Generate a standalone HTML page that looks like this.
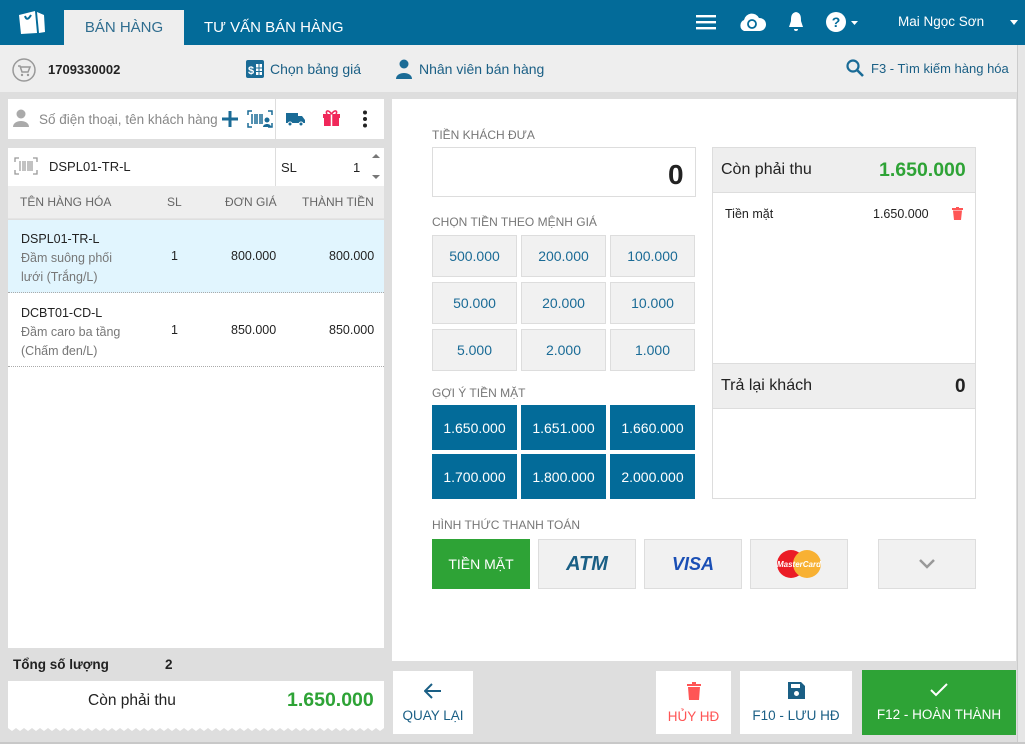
<!DOCTYPE html>
<html><head><meta charset="utf-8"><style>
*{box-sizing:border-box;margin:0;padding:0}
body{width:1025px;height:744px;overflow:hidden;background:#dedede;font-family:"Liberation Sans",sans-serif;position:relative;font-size:13px;color:#222}
.a{position:absolute}
.top{left:0;top:0;width:1025px;height:45px;background:#036b99}
.sub{left:0;top:45px;width:1017px;height:47px;background:#eeeeee}
.w{background:#fff}
.btn{position:absolute;display:flex;align-items:center;justify-content:center}
.den{background:#f1f1f1;border:1px solid #ddd;color:#1a6b96;font-size:14px;width:85px;height:42px}
.sug{background:#036b99;color:#fff;font-size:14px;width:85px;height:45px}
.lbl{color:#777;font-size:12px}
.pay{background:#f1f1f1;border:1px solid #ddd;width:98px;height:50px}
</style></head><body>
<div class="a" style="right:0;top:45px;width:8px;height:699px;background:#e6e6e6;border-left:1px solid #ccc"></div>
<div class="a" style="left:0;bottom:0;width:1025px;height:2px;background:#c8c8c8"></div>
<div class="a top"></div>
<svg class="a" style="left:17px;top:9px" width="30" height="26" viewBox="0 0 30 26"><path d="M2 6 L18 2 L20 24 L4 25 Z" fill="#fff"/><path d="M20 3 L27 6 L28 23 L22 24 Z" fill="#fff"/><path d="M8 7 Q10 13 14 6" stroke="#036b99" stroke-width="2" fill="none"/></svg>
<div class="a" style="left:64px;top:10px;width:120px;height:35px;background:#eee;color:#2f6d8f;font-size:15px;text-align:center;line-height:36px">BÁN HÀNG</div>
<div class="a" style="left:204px;top:10px;color:#fff;font-size:15px;line-height:36px">TƯ VẤN BÁN HÀNG</div>
<svg class="a" style="left:696px;top:14px" width="20" height="16"><rect y="1" width="20" height="2.4" fill="#fff"/><rect y="7" width="20" height="2.4" fill="#fff"/><rect y="13" width="20" height="2.4" fill="#fff"/></svg>
<svg class="a" style="left:738px;top:11px" width="28" height="22"><path d="M6 20 A6 6 0 0 1 6 9 A8 8 0 0 1 21 7 A6 6 0 0 1 22 20 Z" fill="#fff"/><circle cx="14" cy="13" r="4" stroke="#036b99" stroke-width="1.8" fill="none"/></svg>
<svg class="a" style="left:787px;top:11px" width="18" height="22"><path d="M9 1 C4 2 4 6 4 10 L2 16 L16 16 L14 10 C14 6 14 2 9 1Z M7 18 h4 a2 2 0 0 1-4 0Z" fill="#fff"/></svg>
<svg class="a" style="left:825px;top:11px" width="36" height="22"><circle cx="11" cy="11" r="10" fill="#fff"/><text x="11" y="16" font-size="14" font-weight="bold" fill="#036b99" text-anchor="middle" font-family="Liberation Sans">?</text><path d="M26 10 h7 l-3.5 4z" fill="#fff"/></svg>
<div class="a" style="left:898px;top:14px;color:#fff;font-size:13.5px">Mai Ngọc Sơn</div>
<svg class="a" style="left:1010px;top:20px" width="9" height="6"><path d="M0 0h8l-4 5z" fill="#fff"/></svg>

<div class="a sub"></div>
<svg class="a" style="left:12px;top:58px" width="24" height="24"><circle cx="12" cy="12" r="11" fill="none" stroke="#999" stroke-width="1.5"/><path d="M6 8h2l2 6h6l2-5h-9" stroke="#999" stroke-width="1.5" fill="none"/><circle cx="10" cy="17" r="1.2" fill="#999"/><circle cx="16" cy="17" r="1.2" fill="#999"/></svg>
<div class="a" style="left:48px;top:62px;font-weight:bold;font-size:13px">1709330002</div>
<svg class="a" style="left:246px;top:60px" width="18" height="18"><rect width="18" height="18" rx="2" fill="#1a6b96"/><text x="5" y="14" font-size="11" fill="#fff" font-weight="bold" text-anchor="middle" font-family="Liberation Sans">$</text><rect x="10" y="4" width="6" height="11" fill="#fff"/><path d="M13 4v11M10 8h6M10 11.5h6" stroke="#1a6b96"/></svg>
<div class="a" style="left:270px;top:61px;color:#1a5f85;font-size:14px">Chọn bảng giá</div>
<svg class="a" style="left:395px;top:59px" width="18" height="20"><circle cx="9" cy="5" r="4.5" fill="#1a6b96"/><path d="M1 20 C1 12 17 12 17 20Z" fill="#1a6b96"/></svg>
<div class="a" style="left:419px;top:61px;color:#1a5f85;font-size:14px">Nhân viên bán hàng</div>
<svg class="a" style="left:846px;top:59px" width="18" height="18"><circle cx="7" cy="7" r="5.5" stroke="#1a6b96" stroke-width="2.2" fill="none"/><path d="M11 11l6 6" stroke="#1a6b96" stroke-width="2.6"/></svg>
<div class="a" style="left:871px;top:61px;color:#1a5f85;font-size:13px">F3 - Tìm kiếm hàng hóa</div>

<!-- left -->
<div class="a w" style="left:8px;top:99px;width:376px;height:40px"></div>
<div class="a" style="left:275px;top:99px;width:1px;height:40px;background:#ddd"></div>
<svg class="a" style="left:12px;top:109px" width="18" height="18"><circle cx="9" cy="5" r="4.5" fill="#aaa"/><path d="M1 18 C1 10 17 10 17 18Z" fill="#aaa"/></svg>
<div class="a" style="left:39px;top:112px;color:#888;font-size:13.5px">Số điện thoại, tên khách hàng</div>
<svg class="a" style="left:221px;top:110px" width="18" height="18"><path d="M9 1v16M1 9h16" stroke="#1a6b96" stroke-width="3"/></svg>
<svg class="a" style="left:247px;top:110px" width="26" height="18"><path d="M1 5V1h4M21 1h4v4M1 13v4h4M21 17h4v-4" stroke="#1a6b96" fill="none" stroke-width="1.5"/><path d="M5 4v10M8 4v10M10 4v10M13 4v10M15 4v10" stroke="#1a6b96" stroke-width="1.5"/><circle cx="20" cy="10" r="2.5" fill="#1a6b96"/><path d="M16 17c0-4 8-4 8 0z" fill="#1a6b96"/></svg>
<svg class="a" style="left:286px;top:111px" width="20" height="16"><path d="M0 2h12v10H0z M12 5h4l3 4v3h-7z" fill="#1a6b96"/><circle cx="4" cy="13" r="2" fill="#1a6b96" stroke="#fff"/><circle cx="15" cy="13" r="2" fill="#1a6b96" stroke="#fff"/></svg>
<svg class="a" style="left:322px;top:109px" width="19" height="18"><rect x="1" y="5" width="17" height="4" fill="#f0285a"/><rect x="2" y="9" width="15" height="8" fill="#f0285a"/><path d="M9.5 5v12" stroke="#fff" stroke-width="1.5"/><path d="M9.5 5C6 0 3 2 5 5M9.5 5C13 0 16 2 14 5" stroke="#f0285a" stroke-width="1.6" fill="none"/></svg>
<svg class="a" style="left:362px;top:110px" width="6" height="18"><circle cx="3" cy="2.5" r="2" fill="#222"/><circle cx="3" cy="9" r="2" fill="#222"/><circle cx="3" cy="15.5" r="2" fill="#222"/></svg>

<div class="a w" style="left:8px;top:148px;width:376px;height:38px"></div>
<div class="a" style="left:275px;top:148px;width:1px;height:38px;background:#ddd"></div>
<svg class="a" style="left:14px;top:157px" width="24" height="18"><path d="M1 5V1h4M19 1h4v4M1 13v4h4M19 17h4v-4" stroke="#999" fill="none" stroke-width="1.3"/><path d="M6 4v10M9 4v10M11 4v10M14 4v10M16 4v10M18 4v10" stroke="#999" stroke-width="1.2"/></svg>
<div class="a" style="left:49px;top:159px;font-size:13px">DSPL01-TR-L</div>
<div class="a" style="left:281px;top:160px;font-size:13px">SL</div>
<div class="a" style="left:353px;top:160px;font-size:13px">1</div>
<svg class="a" style="left:372px;top:153px" width="8" height="28"><path d="M0 5l4-4 4 4z M0 22l4 4 4-4z" fill="#777"/></svg>

<div class="a" style="left:8px;top:186px;width:376px;height:33px;background:#eee;border-bottom:1px solid #e4e4e4"></div>
<div class="a lbl" style="left:20px;top:195px;color:#666">TÊN HÀNG HÓA</div>
<div class="a lbl" style="left:167px;top:195px;color:#666">SL</div>
<div class="a lbl" style="left:225px;top:195px;color:#666">ĐƠN GIÁ</div>
<div class="a lbl" style="left:302px;top:195px;color:#666">THÀNH TIỀN</div>
<div class="a" style="left:8px;top:220px;width:376px;height:428px;background:#fff"></div>
<div class="a" style="left:8px;top:220px;width:376px;height:73px;background:#e1f5fe;border-bottom:1px dotted #aaa"></div>
<div class="a" style="left:8px;top:293px;width:376px;height:74px;border-bottom:1px dotted #aaa"></div>
<div class="a" style="left:21px;top:230px;font-size:12.5px;line-height:19px">DSPL01-TR-L<br><span style="color:#777">Đầm suông phối<br>lưới (Trắng/L)</span></div>
<div class="a" style="left:171px;top:249px;font-size:12.5px">1</div>
<div class="a" style="left:231px;top:249px;font-size:12.5px">800.000</div>
<div class="a" style="left:329px;top:249px;font-size:12.5px">800.000</div>
<div class="a" style="left:21px;top:304px;font-size:12.5px;line-height:19px">DCBT01-CD-L<br><span style="color:#777">Đầm caro ba tầng<br>(Chấm đen/L)</span></div>
<div class="a" style="left:171px;top:323px;font-size:12.5px">1</div>
<div class="a" style="left:231px;top:323px;font-size:12.5px">850.000</div>
<div class="a" style="left:329px;top:323px;font-size:12.5px">850.000</div>

<div class="a" style="left:13px;top:657px;font-weight:bold;font-size:13.5px">Tổng số lượng</div>
<div class="a" style="left:165px;top:657px;font-weight:bold;font-size:13.5px">2</div>
<div class="a w" style="left:8px;top:681px;width:376px;height:45px"></div>
<svg class="a" style="left:8px;top:725px" width="376" height="6"><path d="M0 0 L376 0 L376 3 L372 6 L368 3 L364 6 L360 3 L356 6 L352 3 L348 6 L344 3 L340 6 L336 3 L332 6 L328 3 L324 6 L320 3 L316 6 L312 3 L308 6 L304 3 L300 6 L296 3 L292 6 L288 3 L284 6 L280 3 L276 6 L272 3 L268 6 L264 3 L260 6 L256 3 L252 6 L248 3 L244 6 L240 3 L236 6 L232 3 L228 6 L224 3 L220 6 L216 3 L212 6 L208 3 L204 6 L200 3 L196 6 L192 3 L188 6 L184 3 L180 6 L176 3 L172 6 L168 3 L164 6 L160 3 L156 6 L152 3 L148 6 L144 3 L140 6 L136 3 L132 6 L128 3 L124 6 L120 3 L116 6 L112 3 L108 6 L104 3 L100 6 L96 3 L92 6 L88 3 L84 6 L80 3 L76 6 L72 3 L68 6 L64 3 L60 6 L56 3 L52 6 L48 3 L44 6 L40 3 L36 6 L32 3 L28 6 L24 3 L20 6 L16 3 L12 6 L8 3 L4 6 L0 3Z" fill="#fff"/></svg>
<div class="a" style="left:88px;top:692px;font-size:15.5px">Còn phải thu</div>
<div class="a" style="left:287px;top:689px;font-size:19.5px;font-weight:bold;color:#2ea336">1.650.000</div>

<!-- right panel -->
<div class="a w" style="left:392px;top:99px;width:624px;height:562px"></div>
<div class="a lbl" style="left:432px;top:128px">TIỀN KHÁCH ĐƯA</div>
<div class="a" style="left:432px;top:147px;width:264px;height:50px;border:1px solid #ddd"></div>
<div class="a" style="left:668px;top:159px;font-size:28px;font-weight:bold">0</div>
<div class="a lbl" style="left:432px;top:215px">CHỌN TIỀN THEO MỆNH GIÁ</div>
<div class="btn den" style="left:432px;top:235px">500.000</div>
<div class="btn den" style="left:521px;top:235px">200.000</div>
<div class="btn den" style="left:610px;top:235px">100.000</div>
<div class="btn den" style="left:432px;top:282px">50.000</div>
<div class="btn den" style="left:521px;top:282px">20.000</div>
<div class="btn den" style="left:610px;top:282px">10.000</div>
<div class="btn den" style="left:432px;top:329px">5.000</div>
<div class="btn den" style="left:521px;top:329px">2.000</div>
<div class="btn den" style="left:610px;top:329px">1.000</div>
<div class="a lbl" style="left:432px;top:386px">GỢI Ý TIỀN MẶT</div>
<div class="btn sug" style="left:432px;top:405px">1.650.000</div>
<div class="btn sug" style="left:521px;top:405px">1.651.000</div>
<div class="btn sug" style="left:610px;top:405px">1.660.000</div>
<div class="btn sug" style="left:432px;top:454px">1.700.000</div>
<div class="btn sug" style="left:521px;top:454px">1.800.000</div>
<div class="btn sug" style="left:610px;top:454px">2.000.000</div>

<div class="a" style="left:712px;top:147px;width:264px;height:352px;border:1px solid #ddd"></div>
<div class="a" style="left:713px;top:148px;width:262px;height:45px;background:#eee;border-bottom:1px solid #ddd"></div>
<div class="a" style="left:721px;top:161px;font-size:16px">Còn phải thu</div>
<div class="a" style="left:879px;top:159px;font-size:19.5px;font-weight:bold;color:#2ea336">1.650.000</div>
<div class="a" style="left:725px;top:207px;font-size:12.5px">Tiền mặt</div>
<div class="a" style="left:873px;top:207px;font-size:12.5px">1.650.000</div>
<svg class="a" style="left:952px;top:207px" width="11" height="13"><path d="M0 1h11v2H0z M4 0h3v1H4z M1 3.5h9l-1 9.5H2z" fill="#f55"/></svg>
<div class="a" style="left:713px;top:363px;width:262px;height:46px;background:#eee;border-top:1px solid #ddd;border-bottom:1px solid #ddd"></div>
<div class="a" style="left:721px;top:377px;font-size:16px">Trả lại khách</div>
<div class="a" style="left:955px;top:376px;font-size:19px;font-weight:bold">0</div>

<div class="a lbl" style="left:432px;top:518px">HÌNH THỨC THANH TOÁN</div>
<div class="btn" style="left:432px;top:539px;width:98px;height:50px;background:#2ea336;color:#fff;font-size:14px">TIỀN MẶT</div>
<div class="btn pay" style="left:538px;top:539px;color:#1a5f85;font-size:20px;font-weight:bold;font-style:italic">ATM</div>
<div class="btn pay" style="left:644px;top:539px;color:#1a4fb5;font-size:18px;font-weight:bold;font-style:italic">VISA</div>
<div class="btn pay" style="left:750px;top:539px"><svg width="48" height="30"><circle cx="16" cy="15" r="14" fill="#eb1c26"/><circle cx="32" cy="15" r="14" fill="#f8b133"/><text x="24" y="18" font-size="8" fill="#fff" text-anchor="middle" font-weight="bold" font-style="italic" font-family="Liberation Sans">MasterCard</text></svg></div>
<div class="btn pay" style="left:878px;top:539px"><svg width="16" height="10"><path d="M1 1l7 7 7-7" stroke="#999" stroke-width="2.5" fill="none"/></svg></div>

<!-- bottom -->
<div class="btn w" style="left:393px;top:671px;width:80px;height:63px;flex-direction:column;color:#1a5f85;font-size:13.5px"><svg width="18" height="16" style="margin-bottom:9px"><path d="M17 8H2M8 1L1 8l7 7" stroke="#1a5f85" stroke-width="2" fill="none"/></svg>QUAY LẠI</div>
<div class="btn w" style="left:656px;top:671px;width:75px;height:63px;flex-direction:column;color:#f55;font-size:13.5px"><svg width="14" height="18" style="margin-bottom:9px"><path d="M0 2h14v2H0z M5 0h4v2H5z M1 5h12l-1 13H2z" fill="#f55"/></svg>HỦY HĐ</div>
<div class="btn w" style="left:740px;top:671px;width:112px;height:63px;flex-direction:column;color:#1a5f85;font-size:13.5px"><svg width="17" height="17" style="margin-bottom:9px"><path d="M0 0h13l4 4v13H0z" fill="#1a5f85"/><rect x="3" y="2" width="9" height="4" fill="#fff"/><circle cx="8.5" cy="11.5" r="2.5" fill="#fff"/></svg>F10 - LƯU HĐ</div>
<div class="btn" style="left:862px;top:670px;width:154px;height:65px;background:#2ea336;flex-direction:column;color:#fff;font-size:13.5px"><svg width="18" height="14" style="margin-bottom:10px"><path d="M1 7l5 5L17 1" stroke="#fff" stroke-width="2" fill="none"/></svg>F12 - HOÀN THÀNH</div>
</body></html>
